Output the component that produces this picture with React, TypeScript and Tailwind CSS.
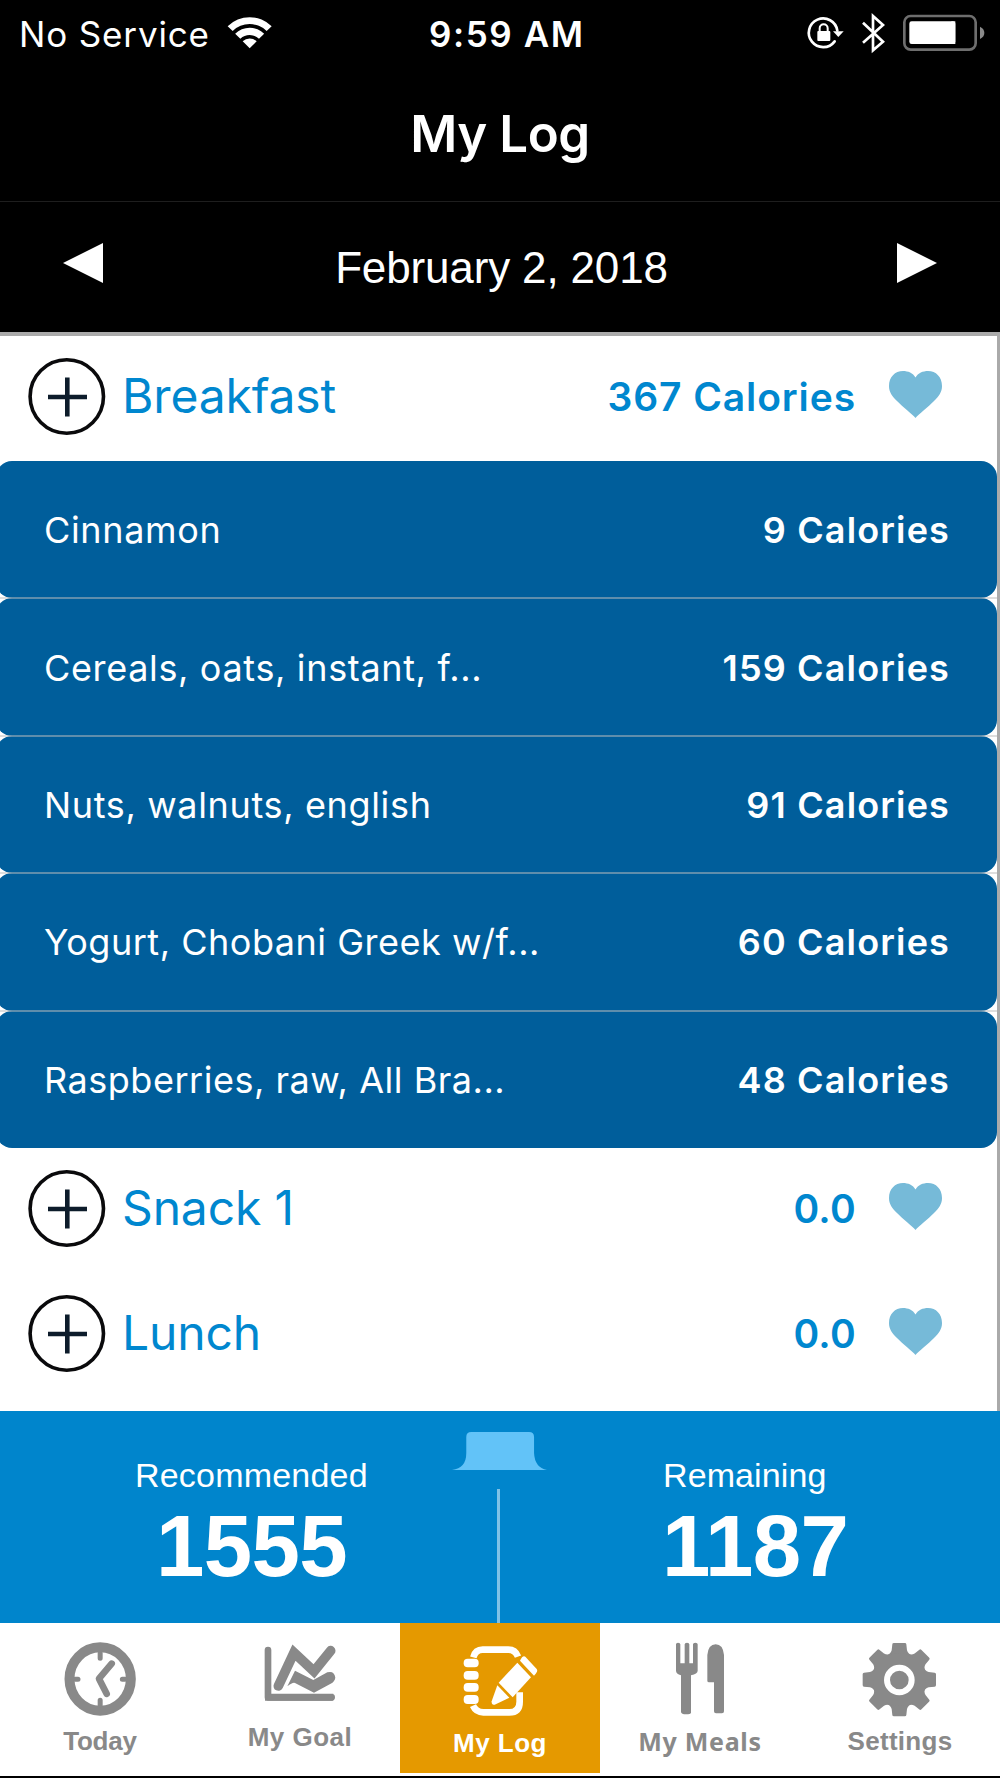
import type { ReactNode } from "react";

const inter = "font-['Inter',sans-serif]";
const helv = "font-['Liberation_Sans',Arial,sans-serif]";

function StatusBar() {
  return (
    <div className={`grid h-[68px] grid-cols-[429px_361px_210px] items-center text-[35px] leading-[68px] text-white ${inter}`}>
      <div className="flex items-center pl-[19px]">
        <span className="w-[204px] whitespace-nowrap tracking-[0.85px]">No Service</span>
        <svg width="54" height="68" viewBox="670 0 162 204" fill="#fff">
          <path d="M684 79A93 93 0 0 1 816 79L801 93A73 73 0 0 0 699 93Z" />
          <path d="M706.500 101.500A61 61 0 0 1 793.500 101.500L778 116A41 41 0 0 0 722 116Z" />
          <path d="M729 124A30 30 0 0 1 771 124L750 145Z" />
        </svg>
      </div>
      <span className="whitespace-nowrap font-semibold tracking-[1.6px]">9:59 AM</span>
      <svg width="210" height="68" viewBox="0 0 630 204" fill="none" stroke="#fff">
        <path d="M142 92A43 43 0 1 0 134 124" strokeWidth="8" strokeLinecap="round" />
        <path d="M129 94H161L145 111Z" fill="#fff" stroke="none" />
        <rect x="82" y="93" width="39" height="30" rx="3" fill="#fff" stroke="none" />
        <path d="M89 95V85A12 12 0 0 1 113 85V95" strokeWidth="6" />
        <path d="M219 68L279 125L249 151V48L279 75L219 128" strokeWidth="8" />
        <rect x="343" y="48" width="214" height="101" rx="19" stroke="#6e6e6e" strokeWidth="8" />
        <rect x="358" y="64" width="138" height="68" rx="7" fill="#fff" stroke="none" />
        <path d="M496 64H484V132H496Z" fill="#fff" stroke="none" />
        <path d="M570 80Q583 86 583 98.500Q583 111 570 117Z" fill="#8a8a8a" stroke="none" />
      </svg>
    </div>
  );
}

function DateBar() {
  return (
    <div className="flex h-[130px] items-center justify-between px-[63px]">
      <svg className="mb-[9px]" width="40" height="40" viewBox="0 0 40 40" fill="#fff">
        <path d="M0 20L40 0V40Z" />
      </svg>
      <span className={`ml-[3px] mt-[2px] whitespace-nowrap text-[44px] leading-[60px] tracking-[-0.15px] text-white ${helv}`}>
        February 2, 2018
      </span>
      <svg className="mb-[9px]" width="40" height="40" viewBox="0 0 40 40" fill="#fff">
        <path d="M40 20L0 0V40Z" />
      </svg>
    </div>
  );
}

function MealHeader({ name, value, tracking }: { name: string; value: string; tracking: string }) {
  return (
    <div className={`flex h-[125px] shrink-0 items-center pb-[4px] pl-[28px] pr-[55px] text-[#0087cf] ${inter}`}>
      <svg width="78" height="78" viewBox="0 0 78 78" fill="none">
        <circle cx="38.800" cy="38.500" r="36.700" stroke="#0a0a0c" strokeWidth="3.600" />
        <path d="M39.300 19.500V58.500M20 39H59" stroke="#0d1c2b" strokeWidth="4.600" />
      </svg>
      <span className="mb-[2px] ml-[16px] grow whitespace-nowrap text-[48px] leading-[60px] tracking-[-0.15px]">{name}</span>
      <span className={`mt-px whitespace-nowrap text-[39px] font-semibold leading-[60px] ${tracking}`}>{value}</span>
      <svg className="mb-[4px] ml-[33px]" width="53" height="47" viewBox="0 0 53 47" fill="#76bad8">
        <path d="M26.500 47C23 43 14 36 8 30C3 25 0 21 0 15C0 6 6 0 14 0C19 0 24 2 26.500 6.500C29 2 34 0 39 0C47 0 53 6 53 15C53 21 50 25 45 30C39 36 30 43 26.500 47Z" />
      </svg>
    </div>
  );
}

const foods = [
  { name: "Cinnamon", cal: "9 Calories", tracking: "tracking-[0.65px]" },
  { name: "Cereals, oats, instant, f...", cal: "159 Calories", tracking: "tracking-[0.65px]" },
  { name: "Nuts, walnuts, english", cal: "91 Calories", tracking: "tracking-[0.65px]" },
  { name: "Yogurt, Chobani Greek w/f...", cal: "60 Calories", tracking: "tracking-[0.52px]" },
  { name: "Raspberries, raw, All Bra...", cal: "48 Calories", tracking: "tracking-[0.52px]" },
];

function FoodList() {
  return (
    <div className="flex h-[687px] shrink-0 flex-col overflow-hidden">
      {foods.map((f, i) => (
        <div key={f.name} className="relative min-h-0 flex-1">
          <div
            className={`-ml-1 flex h-full items-center justify-between rounded-2xl bg-[#005e9b] pl-[48px] pr-[47px] pt-[1px] text-[36px] leading-[50px] text-white ${inter}`}
          >
            <span className={`whitespace-nowrap ${f.tracking}`}>{f.name}</span>
            <span className="whitespace-nowrap font-semibold tracking-[1.15px]">{f.cal}</span>
          </div>
          {i < foods.length - 1 && <div className="absolute -bottom-px left-0 z-10 h-[2px] w-full bg-[#bebebe]/50" />}
        </div>
      ))}
    </div>
  );
}

function Summary() {
  return (
    <div className={`grid h-[212px] shrink-0 grid-cols-[452px_95px_1fr] bg-[#0085cc] text-white ${helv}`}>
      <div className="flex flex-col items-start pt-[44px]">
        <span className="ml-[135px] text-[34px] leading-[40px] tracking-[0.2px]">Recommended</span>
        <span className="ml-[156px] mt-[6px] text-[87px] font-bold leading-[90px] tracking-[-0.6px]">1555</span>
      </div>
      <div className="flex flex-col">
        <svg className="mt-[21px]" width="95" height="38" viewBox="155 127 286 114" fill="#62c3f8">
          <path d="M155 241Q198 236 198 190V142Q198 127 213 127H387Q402 127 402 142V190Q404 234 441 241Z" />
        </svg>
        <div className="ml-[45px] mt-[19px] w-[3px] grow bg-[#80c2e6]" />
      </div>
      <div className="flex flex-col items-start pt-[44px]">
        <span className="ml-[116px] text-[34px] leading-[40px] tracking-[0.1px]">Remaining</span>
        <span className="ml-[115px] mt-[6px] text-[87px] font-bold leading-[90px] tracking-[-0.6px]">1187</span>
      </div>
    </div>
  );
}

function Tab({ label, box, size, text, active, children }: { label: string; box: string; size: string; text: string; active?: boolean; children: ReactNode }) {
  return (
    <div className={`flex w-[200px] flex-col items-center overflow-hidden ${active ? "h-[150px] bg-[#e59900] text-white" : "h-[153px] text-[#898989]"}`}>
      <svg className={`w-[200px] shrink-0 ${size}`} viewBox={box} preserveAspectRatio="xMidYMin slice" fill="currentColor">
        {children}
      </svg>
      <span className={`whitespace-nowrap font-bold leading-[26px] ${text}`}>{label}</span>
    </div>
  );
}

const label = "text-[26px] font-['Liberation_Sans',Arial,sans-serif]";

function TabBar() {
  return (
    <div className="flex h-[153px] shrink-0 bg-white">
      <Tab label="Today" box="0 39 600 315" size="h-[105px]" text={`${label} tracking-[-0.2px]`}>
        <ellipse cx="300.500" cy="207" rx="92" ry="95" fill="none" stroke="currentColor" strokeWidth="30" />
        <path d="M300.500 130V145M300.500 271V286M226 208H234M367 208H375" stroke="currentColor" strokeWidth="15" strokeLinecap="round" />
        <path d="M335 161L297 206L320 251" fill="none" stroke="currentColor" strokeWidth="20" strokeLinecap="round" strokeLinejoin="round" />
      </Tab>
      <Tab label="My Goal" box="600 39 600 303" size="h-[101px]" text={`${label} tracking-[0.5px]`}>
        <path d="M804 120V262H995" fill="none" stroke="currentColor" strokeWidth="20" strokeLinecap="round" strokeLinejoin="round" />
        <path d="M795 262V272H1000V251H812Z" />
        <path d="M885 182L940 210L982 187Q1003 181 1006 203Q1004 215 992 221L942 248L885 219Q878 216 862 229Z" />
        <path d="M835 228L882 128L942 184L992 122" fill="none" stroke="currentColor" strokeWidth="29" strokeLinecap="round" strokeLinejoin="miter" />
      </Tab>
      <Tab active label="My Log" box="0 39 600 321" size="h-[107px]" text={`${label} tracking-[0.5px]`}>
        <path d="M220 142Q226 119 248 119H325Q346 119 354 140" fill="none" stroke="currentColor" strokeWidth="20" />
        <path d="M359 247V275Q359 307 328 307H250Q228 307 219 287" fill="none" stroke="currentColor" strokeWidth="20" />
        <rect x="191" y="146" width="45" height="26" rx="12" />
        <rect x="191" y="183" width="45" height="26" rx="12" />
        <rect x="191" y="219" width="45" height="26" rx="12" />
        <rect x="191" y="255" width="45" height="27" rx="12" />
        <path d="M352 158L393 202L338 262L296 218Z" />
        <path d="M376 140L410 177Q416 184 402 197L360 152Q368 135 376 140Z" />
        <path d="M292 226L328 263L284 284Q274 286 275 274Z" />
      </Tab>
      <Tab label="My Meals" box="0 39 600 315" size="h-[105px]" text="text-[25px] tracking-[0.7px] font-['Noto_Sans',sans-serif]">
        <path d="M228 103Q228 98 234 98Q241 98 241 103V160H254V103Q254 98 261 98Q268 98 268 103V160H279V103Q279 98 286 98Q293 98 293 103V182Q293 191 273 196V308Q272 313 258 313Q244 313 243 306V196Q228 191 228 182Z" />
        <path d="M322 212V135Q325 103 347 103Q369 103 372 135V304Q372 310 366 310H348Q342 310 342 304V217H327Q322 217 322 212Z" />
      </Tab>
      <Tab label="Settings" box="600 39 600 315" size="h-[105px]" text={`${label} tracking-[0.3px]`}>
        {[0, 45, 90, 135, 180, 225, 270, 315].map((a) => (
          <path key={a} transform={`translate(898 209) rotate(${a})`} d="M-21 -106Q-21 -110 -16 -110H16Q21 -110 21 -106L23 -88Q26 -76 40 -72L0 -40L-40 -72Q-26 -76 -23 -88Z" />
        ))}
        <circle cx="898" cy="209" r="79" />
        <circle cx="898" cy="210" r="37" fill="none" stroke="#fff" strokeWidth="18" />
      </Tab>
    </div>
  );
}

export default function App() {
  return (
    <div className="flex h-[1778px] w-[1000px] flex-col overflow-hidden bg-black">
      <StatusBar />
      <div className="flex h-[134px] items-center justify-center border-b border-[#1e1e1e] pb-[2px]">
        <h1 className={`whitespace-nowrap text-[51px] font-semibold leading-[60px] tracking-[-0.4px] text-white ${inter}`}>My Log</h1>
      </div>
      <DateBar />
      <div className="flex h-[1079px] shrink-0 flex-col border-r-[3px] border-t-4 border-[#aaaaaa] bg-white">
        <MealHeader name="Breakfast" value="367 Calories" tracking="tracking-[0.9px]" />
        <FoodList />
        <MealHeader name="Snack 1" value="0.0" tracking="tracking-[0.3px]" />
        <MealHeader name="Lunch" value="0.0" tracking="tracking-[0.3px]" />
      </div>
      <Summary />
      <TabBar />
    </div>
  );
}
